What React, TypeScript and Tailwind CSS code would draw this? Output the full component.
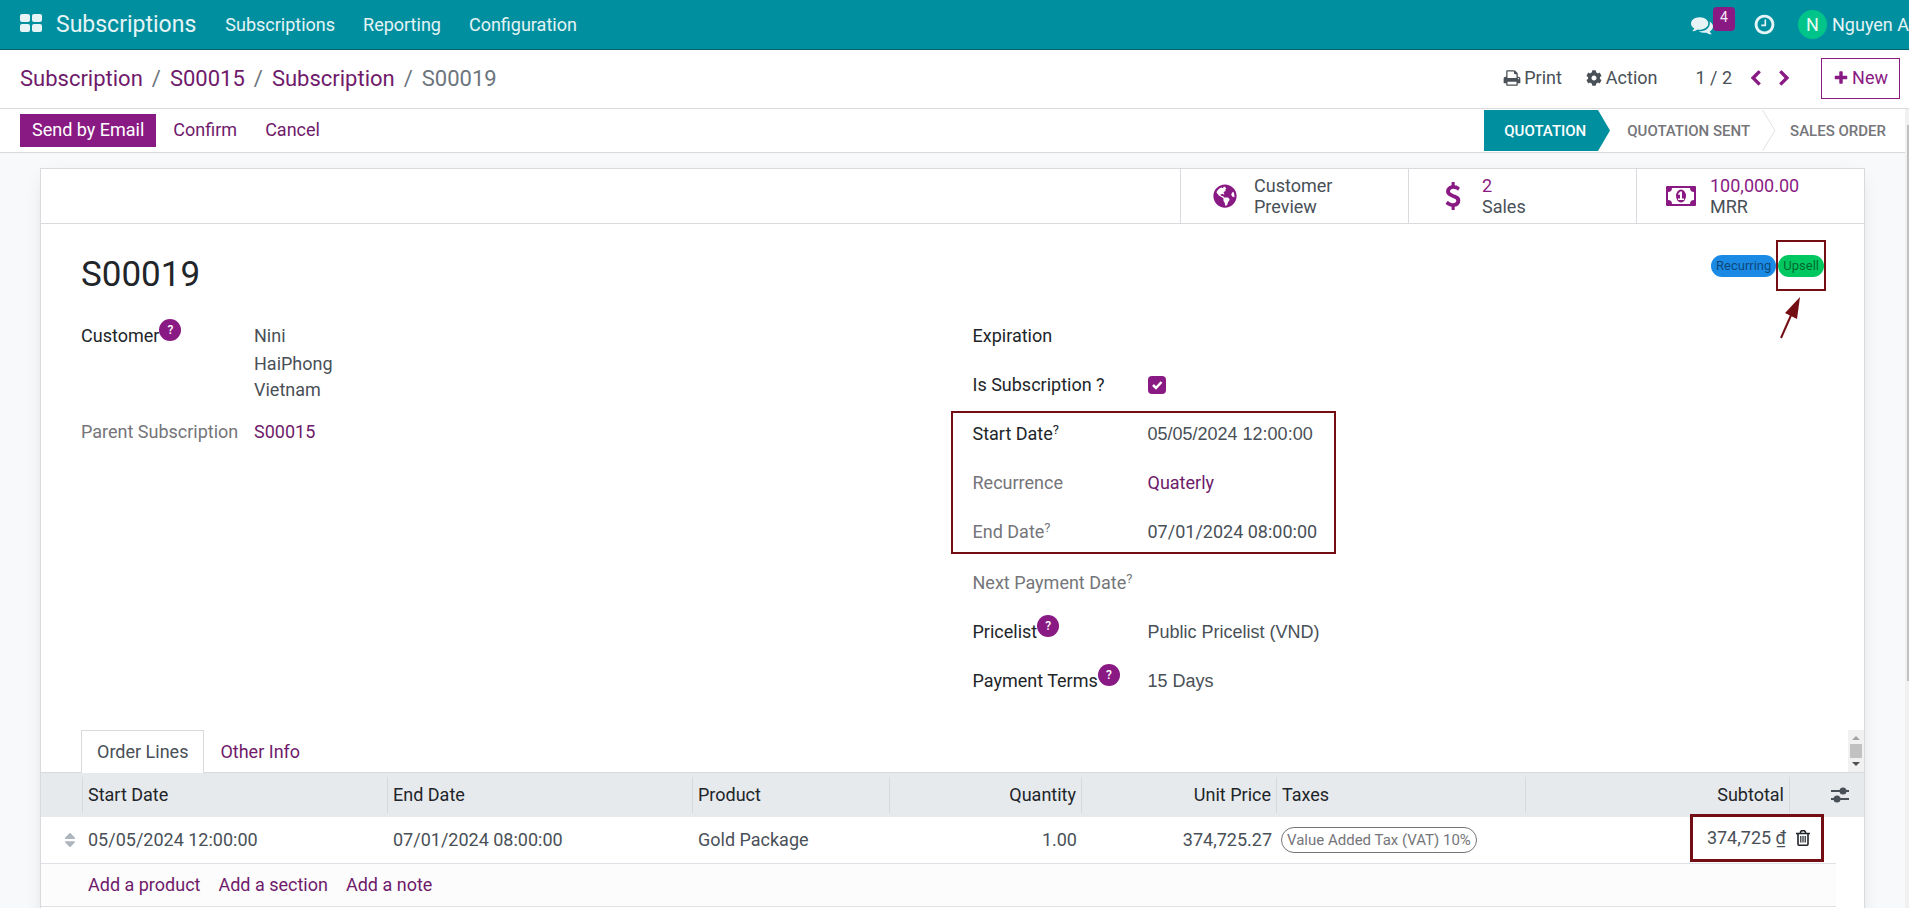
import React from "react";
import { FaCog, FaGlobeAmericas, FaSort } from "react-icons/fa";

const MENU = ["Subscriptions", "Reporting", "Configuration"];
const CRUMBS = ["Subscription", "S00015", "Subscription"];

const GLYPHS = {
  comments:
    "M1408 768q0 139-94 257t-256.5 186.5-353.5 68.5q-86 0-176-16-124 88-278 128-36 9-86 16h-3q-11 0-20.5-8t-11.5-21q-1-3-1-6.5t.5-6.5 2-6l2.5-5 3.5-5.5 4-5 4.5-5 4-4.5q5-6 23-25t26-29.5 22.5-29 25-38.5 20.5-44q-124-72-195-177t-71-224q0-139 94-257t256.5-186.5 353.5-68.5 353.5 68.5 256.5 186.5 94 257zm384 256q0 120-71 224.500t-195 176.500q10 24 20.500 44t25 38.500 22.500 29 26 29.500 23 25q1 1 4 4.500t4.500 5 4 5 3.500 5.500l2.500 5 2 6 .5 6.500-1 6.500q-3 14-13 22t-22 7q-50-7-86-16-154-40-278-128-90 16-176 16-271 0-472-132 58 4 88 4 161 0 309-45t264-129q125-92 192-212t67-254q0-77-23-152 129 71 204 178t75 230z",
  clock:
    "M1024 544v448q0 14-9 23t-23 9h-320q-14 0-23-9t-9-23v-64q0-14 9-23t23-9h224v-352q0-14 9-23t23-9h64q14 0 23 9t9 23zm416 352q0-148-73-273t-198-198-273-73-273 73-198 198-73 273 73 273 198 198 273 73 273-73 198-198 73-273zm224 0q0 209-103 385.5t-279.5 279.5-385.5 103-385.5-103-279.5-279.5-103-385.5 103-385.5 279.5-279.5 385.5-103 385.5 103 279.5 279.5 103 385.5z",
  print:
    "M448 1536h896v-256h-896v256zm0-640h896v-384h-160q-40 0-68-28t-28-68v-160h-640v640zm1152 64q0-26-19-45t-45-19-45 19-19 45 19 45 45 19 45-19 19-45zm128 0v416q0 13-9.5 22.5t-22.5 9.5h-224v160q0 40-28 68t-68 28h-960q-40 0-68-28t-28-68v-160h-224q-13 0-22.5-9.5t-9.5-22.5v-416q0-79 56.5-135.5t135.5-56.5h64v-544q0-40 28-68t68-28h672q40 0 88 20t76 48l152 152q28 28 48 76t20 88v256h64q79 0 135.5 56.5t56.5 135.5z",
  left: "M1427 301l-531 531 531 531q19 19 19 45t-19 45l-166 166q-19 19-45 19t-45-19l-742-742q-19-19-19-45t19-45l742-742q19-19 45-19t45 19l166 166q19 19 19 45t-19 45z",
  right:
    "M1363 877l-742 742q-19 19-45 19t-45-19l-166-166q-19-19-19-45t19-45l531-531-531-531q-19-19-19-45t19-45l166-166q19-19 45-19t45 19l742 742q19 19 19 45t-19 45z",
  plus: "M1600 736v192q0 40-28 68t-68 28h-416v416q0 40-28 68t-68 28h-192q-40 0-68-28t-28-68v-416h-416q-40 0-68-28t-28-68v-192q0-40 28-68t68-28h416v-416q0-40 28-68t68-28h192q40 0 68 28t28 68v416h416q40 0 68 28t28 68z",
  dollar:
    "M1362 1185q0 153-99.5 263.5t-258.5 136.5v175q0 14-9 23t-23 9h-135q-13 0-22.5-9.5t-9.5-22.5v-175q-66-9-127.5-31t-101.5-44.5-74-48-46.5-37.5-17.5-18q-17-21-2-41l103-135q7-10 23-12 15-2 24 9l2 2q113 99 243 125 37 8 74 8 81 0 142.5-43t61.5-122q0-28-15-53t-33.5-42-58.5-37.5-66-32-80-32.5q-39-16-61.5-25t-61.5-26.5-62.5-31-56.5-35.5-53.5-42.5-43.5-49-35.5-58-21-66.5-8.5-78q0-138 98-242t255-134v-180q0-13 9.5-22.5t22.5-9.5h135q14 0 23 9t9 23v176q57 6 110.5 23t87 33.5 63.5 37.5 39 29 15 14q17 18 5 38l-81 146q-8 15-23 16-14 3-27-7-3-3-14.5-12t-39-26.5-58.5-32-74.5-26-85.5-11.5q-95 0-155 43t-60 111q0 26 8.5 48t29.5 41.5 39.5 33 56 31 60.5 27 70 27.5q53 20 81 31.5t76 35 75.5 42.5 62 50 53 63.5 31.5 76.5 13 94z",
};

const Glyph = ({ name, className }: { name: keyof typeof GLYPHS; className: string }) => (
  <svg viewBox="0 0 1792 1792" className={`shrink-0 fill-current ${className}`}>
    <path d={GLYPHS[name]} />
  </svg>
);

const MoneyIcon = () => (
  <svg viewBox="0 0 30 20" className="h-5 w-[30px] fill-current">
    <path
      fillRule="evenodd"
      d="M1 0H29Q30 0 30 1V19Q30 20 29 20H1Q0 20 0 19V1Q0 0 1 0ZM6 2A4 4 0 0 1 2 6V14A4 4 0 0 1 6 18H24A4 4 0 0 1 28 14V6A4 4 0 0 1 24 2Z"
    />
    <ellipse cx="15" cy="10" rx="5" ry="6.5" />
    <path className="fill-white" d="M12 8L14.3 5.5H16V12.5H18V14H12V12.5H14V8.2L13 9.2Z" />
  </svg>
);

const TrashIcon = () => (
  <svg viewBox="0 0 14 16" className="h-4 w-[14px]" fill="none" stroke="currentColor">
    <path
      strokeWidth="1.6"
      d="M0 3.5H14M4.5 3.5V2L5.5 .8H8.5L9.5 2V3.5M2 3.5V14Q2 15.2 3 15.2H11Q12 15.2 12 14V3.5"
    />
    <path strokeWidth="1.2" d="M4.8 6V12.5M7 6V12.5M9.2 6V12.5" />
  </svg>
);

const SlidersIcon = () => (
  <svg viewBox="0 0 18 16" className="h-4 w-[18px] fill-current">
    <path d="M0 3H18V5H0ZM0 11H18V13H0Z" />
    <circle cx="12" cy="4" r="3.5" />
    <circle cx="6" cy="12" r="3.5" />
  </svg>
);

const HelpBadge = () => (
  <button
    aria-label="Help"
    className="-mt-3 flex h-[22px] w-[22px] shrink-0 items-center justify-center rounded-full bg-[#8a1a83] text-xs font-medium text-white"
  >
    ?
  </button>
);

interface RowProps {
  label: string;
  muted?: boolean;
  help?: "badge" | "sup";
  htmlFor?: string;
  children?: React.ReactNode;
}

const FieldRow = ({ label, muted, help, htmlFor, children }: RowProps) => {
  const color = muted ? "text-[#75757a]" : "text-[#212529]";
  return (
    <div className="flex h-[49px] items-center">
      <div className={`flex w-[175px] shrink-0 items-center whitespace-nowrap ${color}`}>
        {htmlFor ? <label htmlFor={htmlFor}>{label}</label> : <span>{label}</span>}
        {help === "sup" && <sup className="static mb-2 text-[13px]">?</sup>}
        {help === "badge" && <HelpBadge />}
      </div>
      {children}
    </div>
  );
};

const StatButton = ({ icon, children }: { icon: React.ReactNode; children: React.ReactNode }) => (
  <button className="flex w-[228px] items-center border-l border-[#d8dadd] text-left leading-[21px]">
    <span className="flex w-[73px] shrink-0 justify-center pl-[14px] text-[24px] text-[#8a1a83]">{icon}</span>
    <span className="w-[120px]">{children}</span>
  </button>
);

const Th = ({ right, children }: { right?: boolean; children?: React.ReactNode }) => (
  <th className="px-0 py-1 font-normal">
    <div
      className={
        right
          ? "flex h-9 items-center justify-end border-r border-[#d5d9dd] pr-[5px]"
          : "flex h-9 items-center border-r border-[#d5d9dd] pl-[5px]"
      }
    >
      {children}
    </div>
  </th>
);

export default function App() {
  return (
    <div className="flex h-screen flex-col overflow-hidden bg-[#f8f9fa] font-['Roboto',sans-serif] text-[18px] leading-[26px] text-[#495057]">
      <header className="flex h-[50px] shrink-0 items-center border-b border-[#04636c] bg-[#008f9f] pl-5 whitespace-nowrap text-white/90">
        <button aria-label="Apps" className="mb-1 grid grid-cols-2 gap-[2px]">
          {[0, 1, 2, 3].map((i) => (
            <span key={i} className="h-2 w-[10px] rounded-[2px] bg-white/90" />
          ))}
        </button>
        <a href="#" className="ml-[14px] text-[23px]">
          Subscriptions
        </a>
        <nav className="ml-[29px] flex gap-7">
          {MENU.map((item) => (
            <a href="#" key={item}>
              {item}
            </a>
          ))}
        </nav>
        <div className="ml-auto flex items-center">
          <button aria-label="Messages" className="flex items-center">
            <Glyph name="comments" className="h-[22px] w-[22px]" />
            <span className="-mt-3 flex h-6 w-[22px] items-center justify-center rounded bg-[#8a1a83] pb-1 text-sm">
              4
            </span>
          </button>
          <button aria-label="Activities" className="ml-[18px]">
            <Glyph name="clock" className="h-[23px] w-[23px]" />
          </button>
          <button className="ml-[22px] flex items-center gap-[5px]">
            <span className="flex h-[29px] w-[29px] items-center justify-center rounded-full bg-[#00c58a]">N</span>
            Nguyen A
          </button>
        </div>
      </header>

      <div className="flex h-[59px] shrink-0 items-center border-b border-[#d8dadd] bg-white pr-[9px] pl-5 whitespace-nowrap">
        <nav aria-label="Breadcrumb" className="flex gap-[9px] text-[22px] text-[#6c757d]">
          {CRUMBS.map((crumb, i) => (
            <React.Fragment key={i}>
              <a href="#" className="text-[#6f1a6b]">
                {crumb}
              </a>
              <span>/</span>
            </React.Fragment>
          ))}
          <span>S00019</span>
        </nav>
        <div className="ml-auto flex items-center pb-[2px]">
          <button className="flex items-center gap-[3px]">
            <Glyph name="print" className="h-[18px] w-[18px]" />
            Print
          </button>
          <button className="ml-6 flex items-center gap-1">
            <FaCog className="text-base" />
            Action
          </button>
          <span className="ml-[38px]">1 / 2</span>
          <button aria-label="Previous" className="ml-[15px] text-[#8a1a83]">
            <Glyph name="left" className="h-[17px] w-[17px]" />
          </button>
          <button aria-label="Next" className="ml-3 text-[#8a1a83]">
            <Glyph name="right" className="h-[17px] w-[17px]" />
          </button>
          <button className="ml-7 flex h-[41px] items-center gap-[3px] border border-[#8a1a83] px-[11px] text-[#8a1a83]">
            <Glyph name="plus" className="h-4 w-4" />
            New
          </button>
        </div>
      </div>

      <div className="flex min-h-0 flex-1">
        <main className="min-w-0 flex-1 overflow-hidden">
          <div className="flex h-[44px] items-center border-b border-[#d8dadd] bg-white pl-5 whitespace-nowrap text-[#6f1a6b]">
            <button className="h-[33px] bg-[#8a1a83] px-3 pb-[2px] text-white">Send by Email</button>
            <button className="ml-[17px] pb-[2px]">Confirm</button>
            <button className="ml-7 pb-[2px]">Cancel</button>
            <div className="ml-auto flex h-[41px] items-center pr-[19px] text-[15px] font-medium text-[#75757a]">
              <button className="flex h-full items-center">
                <span className="flex h-full items-center bg-[#008f9f] pr-3 pl-5 text-white">QUOTATION</span>
                <svg viewBox="0 0 12 41" className="h-full w-3 fill-[#008f9f]">
                  <path d="M0 0L12 20.5L0 41Z" />
                </svg>
              </button>
              <button className="flex h-full items-center pl-[17px]">
                QUOTATION SENT
                <svg viewBox="0 0 14 41" className="ml-3 h-full w-[14px] fill-none stroke-[#dee2e6]">
                  <path d="M.5 0L13 20.5L.5 41" />
                </svg>
              </button>
              <button className="pl-[14px]">SALES ORDER</button>
            </div>
          </div>

          <section className="mx-10 mt-[15px] min-h-[900px] border border-[#d8dadd] bg-white shadow-[0_5px_20px_-10px_rgba(0,0,0,0.25)]">
            <div className="flex h-[55px] justify-end border-b border-[#d8dadd]">
              <StatButton icon={<FaGlobeAmericas />}>
                Customer
                <br />
                Preview
              </StatButton>
              <StatButton icon={<Glyph name="dollar" className="h-7 w-7" />}>
                <span className="text-[#8a1a83]">2</span>
                <br />
                Sales
              </StatButton>
              <StatButton icon={<MoneyIcon />}>
                <span className="text-[#8a1a83]">100,000.00</span>
                <br />
                MRR
              </StatButton>
            </div>

            <div className="flex items-start justify-between pr-[38px] pl-10">
              <h1 className="pt-7 text-[35px] leading-[46px] text-[#212529]">S00019</h1>
              <div className="relative mt-4 flex items-center text-[13px] leading-[22px] text-black/50">
                <span className="rounded-full bg-[#1a8ae5] px-[5px]">Recurring</span>
                <div className="flex h-[51px] items-center border-2 border-[#750e14]">
                  <span className="rounded-full bg-[#00c75f] px-[5px]">Upsell</span>
                </div>
                <svg
                  viewBox="0 0 22 42"
                  className="absolute top-[57px] right-6 h-[42px] w-[22px] fill-[#750e14] stroke-[#750e14]"
                >
                  <path strokeWidth="2" d="M1 41L12 16" />
                  <path stroke="none" d="M20 0L5 16L17 22Z" />
                </svg>
              </div>
            </div>

            <div className="flex pt-[13px] pl-10">
              <div className="w-1/2">
                <div className="flex pt-3">
                  <div className="flex h-[26px] w-[173px] shrink-0 items-center text-[#212529]">
                    Customer
                    <HelpBadge />
                  </div>
                  <div>
                    <p className="mb-[2px]">Nini</p>
                    <p>HaiPhong</p>
                    <p>Vietnam</p>
                  </div>
                </div>
                <div className="mt-4 flex">
                  <span className="w-[173px] shrink-0 text-[#75757a]">Parent Subscription</span>
                  <a href="#" className="text-[#6f1a6b]">
                    S00015
                  </a>
                </div>
              </div>

              <div className="w-1/2">
                <FieldRow label="Expiration" />
                <FieldRow label="Is Subscription ?" htmlFor="is-subscription">
                  <span className="relative flex">
                    <input
                      id="is-subscription"
                      type="checkbox"
                      defaultChecked
                      className="peer h-[18px] w-[18px] appearance-none rounded bg-[#8a1a83]"
                    />
                    <svg
                      viewBox="0 0 18 18"
                      className="pointer-events-none absolute inset-0 hidden fill-none stroke-white peer-checked:block"
                    >
                      <path strokeWidth="2.5" d="M5 9L8 12L13.5 6" />
                    </svg>
                  </span>
                </FieldRow>
                <div className="relative mb-[2px]">
                  <div className="pointer-events-none absolute inset-y-[2px] -left-[22px] w-[385px] border-2 border-[#750e14]" />
                  <FieldRow label="Start Date" help="sup">
                    <span className="font-['Liberation_Sans',sans-serif]">05/05/2024 12:00:00</span>
                  </FieldRow>
                  <FieldRow label="Recurrence" muted>
                    <a href="#" className="text-[#6f1a6b]">
                      Quaterly
                    </a>
                  </FieldRow>
                  <FieldRow label="End Date" muted help="sup">
                    07/01/2024 08:00:00
                  </FieldRow>
                </div>
                <FieldRow label="Next Payment Date" muted help="sup" />
                <FieldRow label="Pricelist" help="badge">
                  <span className="font-['Liberation_Sans',sans-serif]">Public Pricelist (VND)</span>
                </FieldRow>
                <FieldRow label="Payment Terms" help="badge">
                  <span className="font-['Liberation_Sans',sans-serif]">15 Days</span>
                </FieldRow>
              </div>
            </div>

            <div className="mt-[25px] flex h-[43px] justify-between border-b border-[#d8dadd] pl-10">
              <div role="tablist" className="flex h-[43px]">
                <button
                  role="tab"
                  aria-selected="true"
                  className="border border-b-0 border-[#d8dadd] bg-white px-[15px]"
                >
                  Order Lines
                </button>
                <button role="tab" aria-selected="false" className="px-4 text-[#6f1a6b]">
                  Other Info
                </button>
              </div>
              <div className="flex w-4 flex-col items-center justify-between bg-[#f1f1f1] py-[6px]">
                <svg viewBox="0 0 8 4" className="h-1 w-2 fill-[#a3a3a3]">
                  <path d="M0 4L4 0L8 4Z" />
                </svg>
                <div className="h-[14px] w-3 bg-[#c1c1c1]" />
                <svg viewBox="0 0 8 4" className="h-1 w-2 fill-[#505050]">
                  <path d="M0 0L4 4L8 0Z" />
                </svg>
              </div>
            </div>

            <table className="w-full table-fixed border-collapse whitespace-nowrap">
              <colgroup>
                <col className="w-[42px]" />
                <col className="w-[305px]" />
                <col className="w-[305px]" />
                <col className="w-[197px]" />
                <col className="w-[192px]" />
                <col className="w-[195px]" />
                <col className="w-[249px]" />
                <col />
                <col className="w-[46px]" />
                <col className="w-[28px]" />
              </colgroup>
              <thead>
                <tr className="bg-[#e7eaed] text-left text-[#212529]">
                  <Th />
                  <Th>Start Date</Th>
                  <Th>End Date</Th>
                  <Th>Product</Th>
                  <Th right>Quantity</Th>
                  <Th right>Unit Price</Th>
                  <Th>Taxes</Th>
                  <Th right>Subtotal</Th>
                  <th colSpan={2} className="p-0 pl-[41px] text-[#495057]">
                    <button aria-label="Optional columns" className="block">
                      <SlidersIcon />
                    </button>
                  </th>
                </tr>
              </thead>
              <tbody>
                <tr className="h-[46px]">
                  <td className="border-b border-[#dee2e6] pl-5 text-[#adb5bd]">
                    <FaSort className="text-lg" />
                  </td>
                  <td className="border-b border-[#dee2e6] pl-[5px]">05/05/2024 12:00:00</td>
                  <td className="border-b border-[#dee2e6] pl-[5px]">07/01/2024 08:00:00</td>
                  <td className="border-b border-[#dee2e6] pl-[5px]">Gold Package</td>
                  <td className="border-b border-[#dee2e6] pr-[5px] text-right">1.00</td>
                  <td className="border-b border-[#dee2e6] pr-[5px] text-right">374,725.27</td>
                  <td className="border-b border-[#dee2e6] pl-1">
                    <span className="flex h-[26px] w-fit items-center rounded-full border border-[#75757a] px-[5px] text-[15px] text-[#75757a]">
                      Value Added Tax (VAT) 10%
                    </span>
                  </td>
                  <td colSpan={2} className="border-b border-[#dee2e6] p-0 pr-3">
                    <div className="-mt-2 -mb-1 ml-auto flex h-[48px] w-[134px] items-center justify-end gap-[10px] border-3 border-[#750e14] pr-[11px]">
                      374,725 ₫
                      <button aria-label="Delete row" className="text-[#212529]">
                        <TrashIcon />
                      </button>
                    </div>
                  </td>
                  <td />
                </tr>
                <tr className="h-[43px]">
                  <td className="border-b border-[#dee2e6] bg-[#fcfcfc]" />
                  <td colSpan={8} className="border-b border-[#dee2e6] bg-[#fcfcfc] pl-[5px] text-[#6f1a6b]">
                    <div className="flex gap-[18px]">
                      <a href="#">Add a product</a>
                      <a href="#">Add a section</a>
                      <a href="#">Add a note</a>
                    </div>
                  </td>
                  <td />
                </tr>
              </tbody>
            </table>
          </section>
        </main>
        <div className="w-1 bg-[#f1f1f1] pt-4">
          <div className="ml-[2px] h-[556px] bg-[#c1c1c1]" />
        </div>
      </div>
    </div>
  );
}
